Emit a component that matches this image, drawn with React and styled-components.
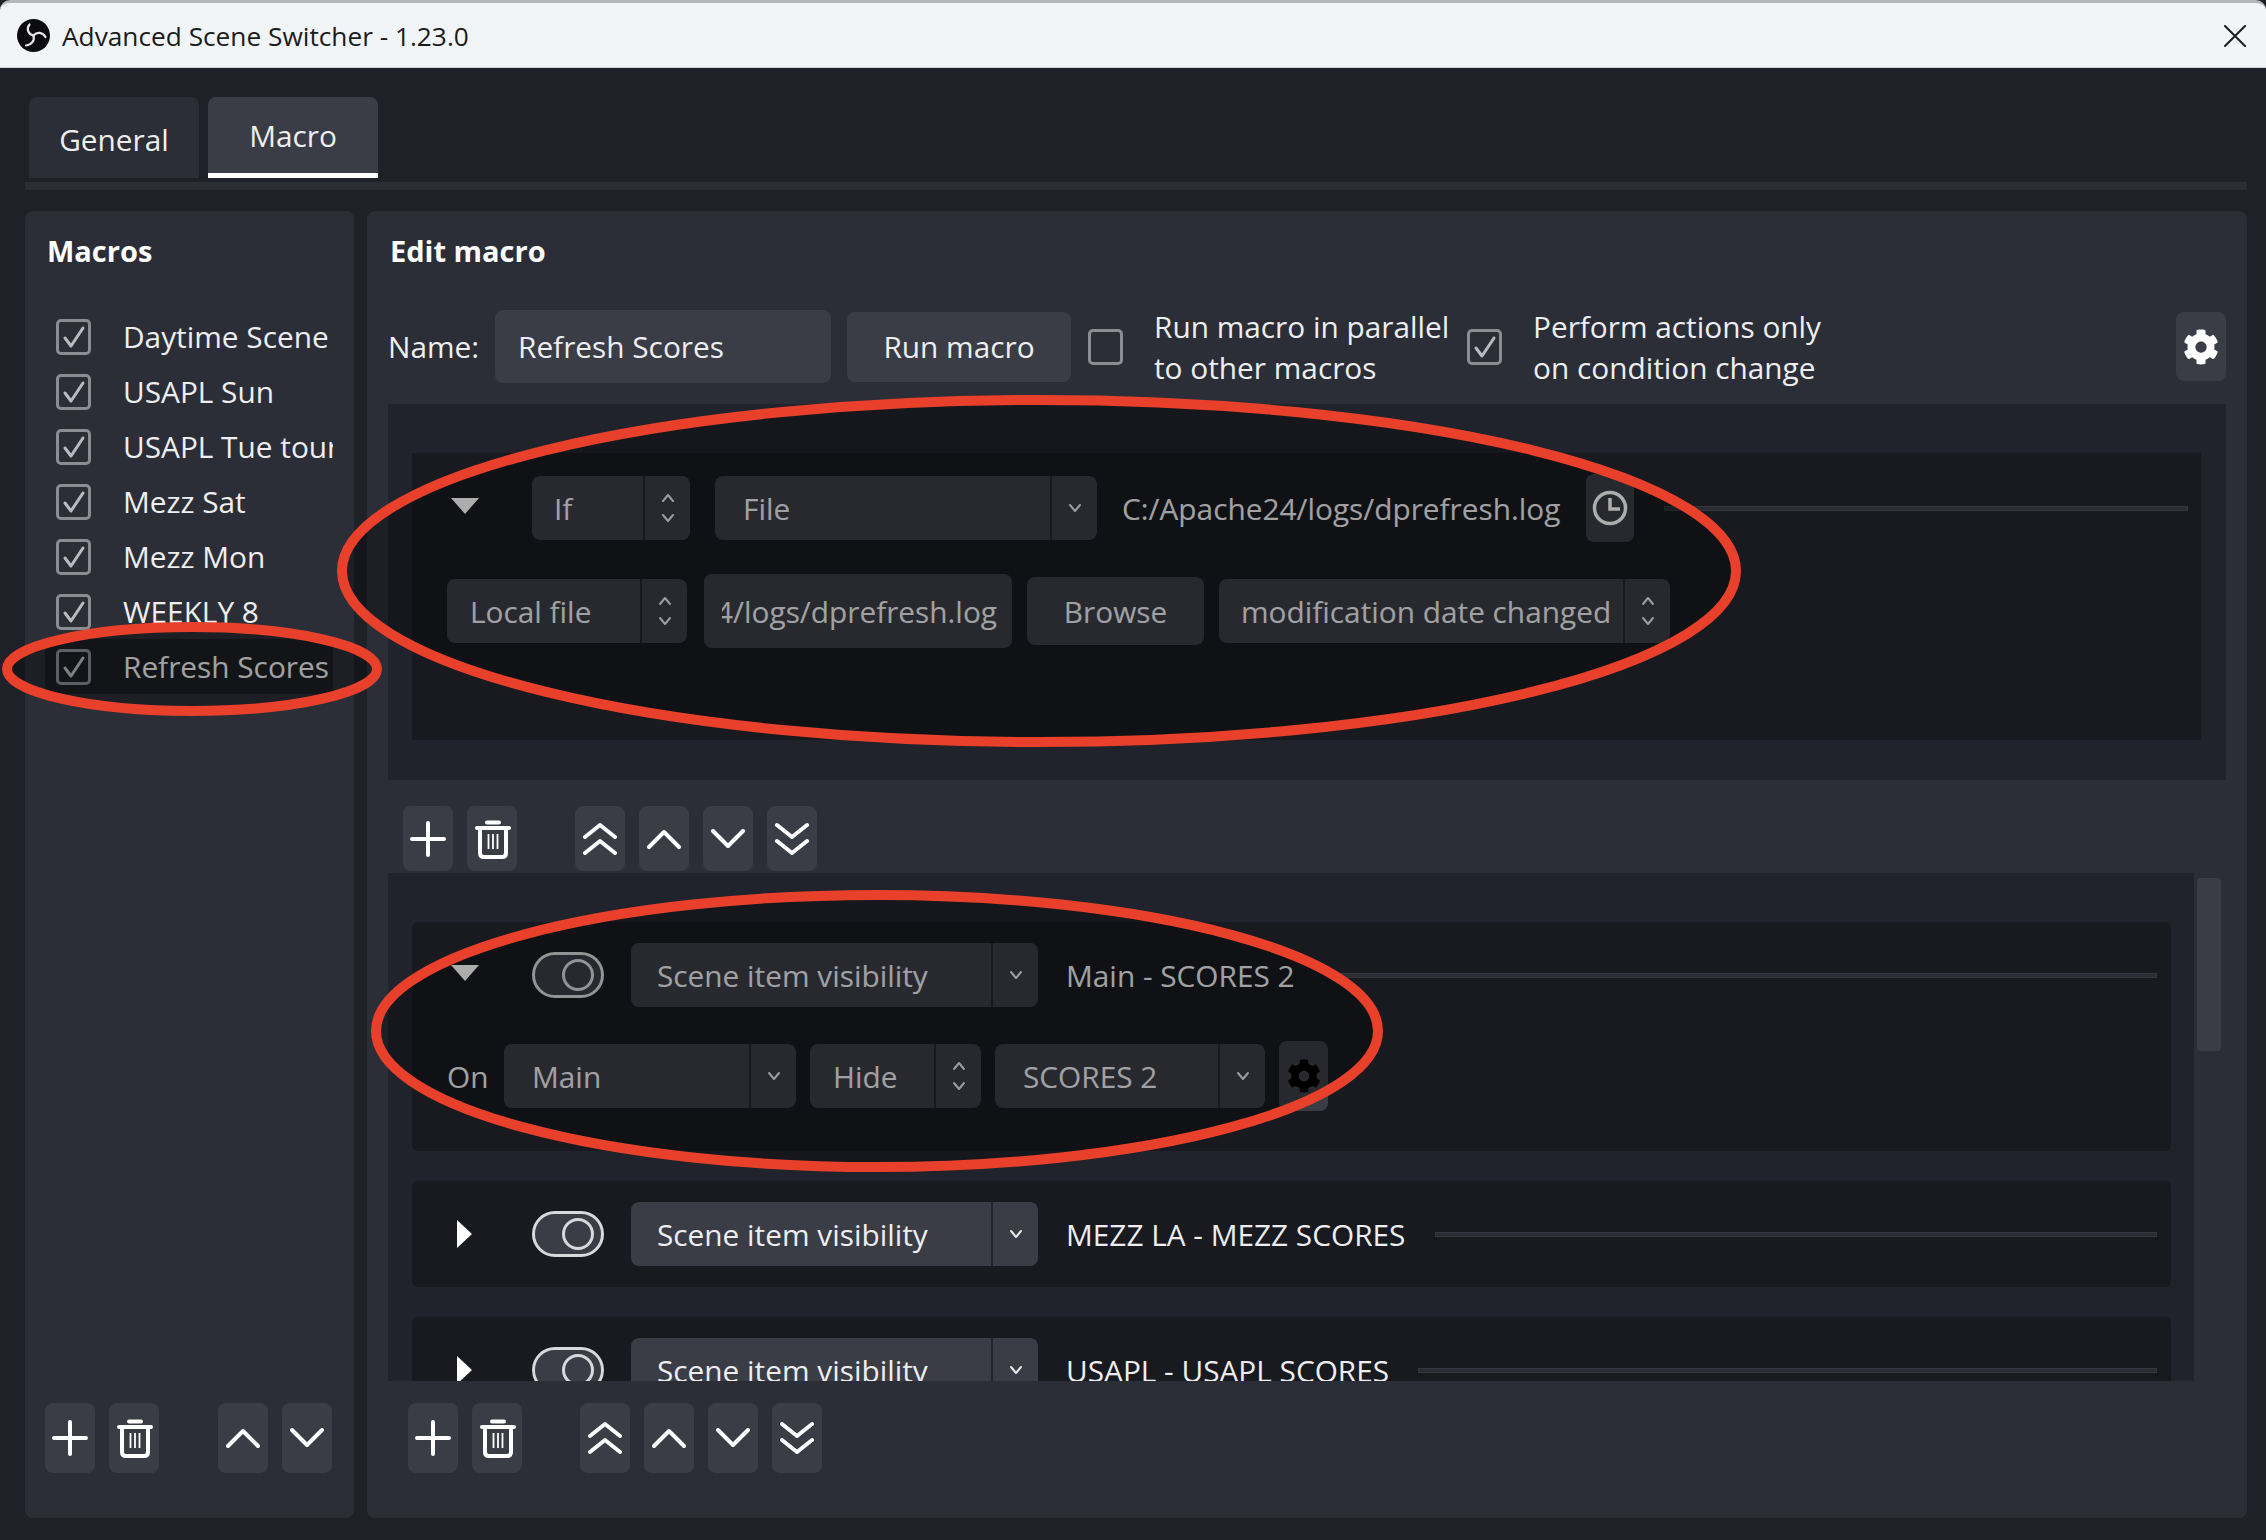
import React from "react";
import styled, { createGlobalStyle } from "styled-components";
import { FaCog } from "react-icons/fa";

const GlobalStyle = createGlobalStyle`
  html, body {
    margin: 0;
    padding: 0;
    background: #1e2128;
  }
  * {
    box-sizing: border-box;
  }
`;

const macroNames = [
  "Daytime Scene",
  "USAPL Sun",
  "USAPL Tue tournament",
  "Mezz Sat",
  "Mezz Mon",
  "WEEKLY 8",
  "Refresh Scores",
];

const Plus = () => (
  <svg width="36" height="36" viewBox="0 0 36 36">
    <path d="M18 2v32M2 18h32" stroke="#fff" strokeWidth="4" strokeLinecap="round" fill="none" />
  </svg>
);

const Trash = () => (
  <TrashWrap width="36" height="40" viewBox="0 0 36 40" fill="none" stroke="#fff">
    <path d="M12 3.500h12" strokeWidth="4" strokeLinecap="round" />
    <path d="M2 9h32" strokeWidth="4" strokeLinecap="round" />
    <path d="M5 9v25c0 2.500 1.500 4 4 4h18c2.500 0 4-1.500 4-4V9" strokeWidth="4" />
    <path d="M13.500 15v15M18 15v15M22.500 15v15" strokeWidth="1.800" />
  </TrashWrap>
);

const Chevron = ({ direction, double }) => {
  const flip = direction === "down" ? "rotate(180 17 17)" : undefined;
  return (
    <svg width="34" height="34" viewBox="0 0 34 34" fill="none" stroke="#fff" strokeWidth="4" strokeLinecap="round" strokeLinejoin="round">
      <g transform={flip}>
        {double ? <path d="M2 15 17 3l15 12M2 31l15-12 15 12" /> : <path d="M2 25 17 10l15 15" />}
      </g>
    </svg>
  );
};

const SmallChevron = () => (
  <svg width="14" height="10" viewBox="0 0 14 10" fill="none" stroke="#e8e8ea" strokeWidth="2" strokeLinecap="round" strokeLinejoin="round">
    <path d="M2 2l5 6 5-6" />
  </svg>
);

const UpDown = () => (
  <svg width="14" height="30" viewBox="0 0 14 30" fill="none" stroke="#e8e8ea" strokeWidth="2" strokeLinecap="round" strokeLinejoin="round">
    <path d="M2 8l5-6 5 6M2 22l5 6 5-6" />
  </svg>
);

const ClockIcon = () => (
  <svg width="36" height="36" viewBox="0 0 36 36" fill="none" stroke="#fff" strokeWidth="3.500">
    <circle cx="18" cy="18" r="15.500" />
    <path d="M18 8v11h10" />
  </svg>
);

const CheckMark = () => (
  <svg width="24" height="26" viewBox="0 0 24 26" fill="none" stroke="#b9bbc0" strokeWidth="3" strokeLinecap="round" strokeLinejoin="round">
    <path d="M3 14l6 8L21 4" />
  </svg>
);

const ObsLogo = () => (
  <svg width="33" height="33" viewBox="0 0 33 33">
    <circle cx="16.500" cy="16.500" r="16.500" fill="#0c0c0e" />
    <g fill="none" stroke="#e6e6e6" strokeWidth="2.200" strokeLinecap="round">
      <path d="M16.500 16.500C11 15 9 10 12.500 5.500" />
      <path d="M16.500 16.500C20 12.500 25.500 13 28.500 18" />
      <path d="M16.500 16.500C18 21.500 14.500 26 9 26.500" />
    </g>
  </svg>
);

const Combo = ({ width, inset, label, arrow = "down" }) => (
  <ComboBox $width={width}>
    <ComboText $inset={inset}>{label}</ComboText>
    <ComboArrow>{arrow === "updown" ? <UpDown /> : <SmallChevron />}</ComboArrow>
  </ComboBox>
);

const ToolButtons = ({ height, full }) => (
  <>
    <ToolGroup>
      <ToolButton $height={height}><Plus /></ToolButton>
      <ToolButton $height={height}><Trash /></ToolButton>
    </ToolGroup>
    <ToolGroup>
      {full && <ToolButton $height={height}><Chevron direction="up" double /></ToolButton>}
      <ToolButton $height={height}><Chevron direction="up" /></ToolButton>
      <ToolButton $height={height}><Chevron direction="down" /></ToolButton>
      {full && <ToolButton $height={height}><Chevron direction="down" double /></ToolButton>}
    </ToolGroup>
  </>
);

const ActionHead = ({ open, label, lineGap }) => (
  <CardRow>
    <Expander>{open ? <TriangleDown /> : <TriangleRight />}</Expander>
    <Toggle />
    <Combo width={407} inset={26} label="Scene item visibility" />
    <RowLabel $left={28}>{label}</RowLabel>
    <Rule $gap={lineGap} $right={14} />
  </CardRow>
);

export default function App() {
  return (
    <Window>
      <GlobalStyle />
      <TitleBar>
        <ObsLogo />
        <TitleText>Advanced Scene Switcher - 1.23.0</TitleText>
        <CloseButton>
          <svg width="22" height="22" viewBox="0 0 22 22" stroke="#1c1c1c" strokeWidth="2" strokeLinecap="round">
            <path d="M1 1l20 20M21 1L1 21" />
          </svg>
        </CloseButton>
      </TitleBar>

      <Body>
        <Tabs>
          <Tab>General</Tab>
          <Tab $active>Macro</Tab>
        </Tabs>
        <TabLine />

        <Columns>
          <MacrosPanel>
            <Heading>Macros</Heading>
            <MacroList>
              {macroNames.map((name) => (
                <MacroRow key={name} $selected={name === "Refresh Scores"}>
                  <CheckBox><CheckMark /></CheckBox>
                  <MacroName>{name}</MacroName>
                </MacroRow>
              ))}
            </MacroList>
            <MacroTools>
              <ToolButtons height={70} />
            </MacroTools>
          </MacrosPanel>

          <EditPanel>
            <Heading>Edit macro</Heading>
            <NameRow>
              <NameLabel>Name:</NameLabel>
              <NameInput>Refresh Scores</NameInput>
              <RunButton>Run macro</RunButton>
              <CheckOption>
                <CheckBox />
                <OptionText $width={294}>Run macro in parallel<br />to other macros</OptionText>
              </CheckOption>
              <CheckOption>
                <CheckBox><CheckMark /></CheckBox>
                <OptionText>Perform actions only<br />on condition change</OptionText>
              </CheckOption>
              <GearButton><FaCog size={36} color="#fff" /></GearButton>
            </NameRow>

            <ConditionsArea>
              <ConditionCard>
                <CardRow>
                  <Expander><TriangleDown /></Expander>
                  <Combo width={158} inset={22} label="If" arrow="updown" />
                  <Combo width={382} inset={28} label="File" />
                  <RowLabel>C:/Apache24/logs/dprefresh.log</RowLabel>
                  <IconButton><ClockIcon /></IconButton>
                  <Rule $gap={30} $right={13} />
                </CardRow>
                <ConditionFields>
                  <Combo width={240} inset={23} label="Local file" arrow="updown" />
                  <PathInput><PathClip>C:/Apache24/logs/dprefresh.log</PathClip></PathInput>
                  <BrowseButton>Browse</BrowseButton>
                  <Combo width={451} inset={22} label="modification date changed" arrow="updown" />
                </ConditionFields>
              </ConditionCard>
            </ConditionsArea>

            <ConditionTools>
              <ToolButtons height={65} full />
            </ConditionTools>

            <ActionsWrap>
              <ActionsList>
                <ActionCard>
                  <ActionHead open label="Main - SCORES 2" lineGap={44} />
                  <ActionFields>
                    <OnLabel>On</OnLabel>
                    <Combo width={292} inset={28} label="Main" />
                    <Combo width={171} inset={23} label="Hide" arrow="updown" />
                    <Combo width={270} inset={28} label="SCORES 2" />
                    <SmallGearButton><FaCog size={34} color="#000" /></SmallGearButton>
                  </ActionFields>
                </ActionCard>
                <ActionCard>
                  <ActionHead label="MEZZ LA - MEZZ SCORES" lineGap={30} />
                </ActionCard>
                <ActionCard>
                  <ActionHead label="USAPL - USAPL SCORES" lineGap={29} />
                </ActionCard>
              </ActionsList>
              <ScrollTrack><ScrollThumb /></ScrollTrack>
            </ActionsWrap>

            <ActionTools>
              <ToolButtons height={70} full />
            </ActionTools>
          </EditPanel>
        </Columns>
      </Body>

      {/* hand drawn highlight rings sitting on top of the window */}
      <Annotations viewBox="0 0 2266 1540">
        <ellipse cx="192" cy="669" rx="185" ry="42" />
        <ellipse cx="1039" cy="571" rx="697" ry="171" />
        <ellipse cx="877" cy="1031" rx="501" ry="136" />
      </Annotations>
    </Window>
  );
}

const Window = styled.div`
  position: relative;
  width: 2266px;
  height: 1540px;
  overflow: hidden;
  background: #1e2128;
  color: #eeeef0;
  font-family: "Open Sans", "Liberation Sans", sans-serif;
  font-size: 29.800px;
`;

const TitleBar = styled.div`
  display: flex;
  align-items: center;
  height: 68px;
  padding: 1px 20px 0 17px;
  background: #f2f5f8;
  border-top: 3px solid #b4b5b6;
  border-bottom: 1px solid #cfd1d3;
  border-radius: 10px 10px 0 0;
`;

const TitleText = styled.div`
  margin-left: 12px;
  font-size: 26.250px;
  color: #1b1b1b;
`;

const CloseButton = styled.div`
  display: flex;
  margin-left: auto;
`;

const Body = styled.div`
  padding: 29px 19px 0 25px;
`;

const Tabs = styled.div`
  display: flex;
  gap: 9px;
  padding-left: 4px;
`;

const Tab = styled.div`
  display: flex;
  align-items: center;
  justify-content: center;
  width: 170px;
  height: 81px;
  padding-top: ${(p) => (p.$active ? 0 : 4)}px;
  background: ${(p) => (p.$active ? "#3a3d46" : "#2b2e36")};
  border-bottom: ${(p) => (p.$active ? "5px solid #fff" : "none")};
  border-radius: 8px 8px 0 0;
`;

const TabLine = styled.div`
  height: 8px;
  margin-top: 4px;
  background: #2b2e36;
`;

const Columns = styled.div`
  display: flex;
  gap: 13px;
  height: 1307px;
  margin-top: 21px;
`;

const Panel = styled.div`
  display: flex;
  flex-direction: column;
  background: #2b2e37;
  border-radius: 8px;
`;

const MacrosPanel = styled(Panel)`
  width: 329px;
  padding: 20px 0 45px 20px;
`;

const EditPanel = styled(Panel)`
  flex: 1;
  padding: 20px 21px 45px 21px;
`;

const Heading = styled.div`
  height: 40px;
  padding-left: 2px;
  font-size: 29px;
  font-weight: 700;
  line-height: 40px;
  color: #fff;
`;

const MacroList = styled.div`
  width: 288px;
  margin-top: 38px;
  overflow: hidden;
`;

const MacroRow = styled.div`
  display: flex;
  align-items: center;
  gap: 32px;
  width: 288px;
  height: 55px;
  padding-left: 11px;
  background: ${(p) => (p.$selected ? "#1c1e24" : "transparent")};
`;

const MacroName = styled.span`
  white-space: nowrap;
`;

const CheckBox = styled.div`
  display: flex;
  flex-shrink: 0;
  align-items: center;
  justify-content: center;
  width: 35px;
  height: 36px;
  border: 3px solid #8b8d94;
  border-radius: 5px;
`;

const MacroTools = styled.div`
  display: flex;
  gap: 59px;
  margin-top: auto;
`;

const ToolGroup = styled.div`
  display: flex;
  gap: 14px;
`;

const ToolButton = styled.div`
  display: flex;
  align-items: center;
  justify-content: center;
  width: 50px;
  height: ${(p) => p.$height}px;
  background: #3a3d46;
  border-radius: 8px;
`;

const TrashWrap = styled.svg`
  margin-left: 2px;
`;

const NameRow = styled.div`
  display: flex;
  align-items: center;
  margin-top: 39px;
  height: 73px;
`;

const NameLabel = styled.div`
  width: 107px;
`;

const NameInput = styled.div`
  display: flex;
  align-items: center;
  width: 336px;
  height: 73px;
  padding-left: 23px;
  background: #3a3d46;
  border-radius: 8px;
`;

const RunButton = styled.div`
  display: flex;
  align-items: center;
  justify-content: center;
  width: 224px;
  height: 70px;
  margin: 0 17px 0 16px;
  background: #3a3d46;
  border-radius: 8px;
`;

const CheckOption = styled.div`
  display: flex;
  align-items: center;
  gap: 31px;
  margin-right: 19px;
`;

const OptionText = styled.div`
  width: ${(p) => (p.$width ? `${p.$width}px` : "auto")};
  line-height: 41px;
  white-space: nowrap;
`;

const GearButton = styled.div`
  display: flex;
  align-items: center;
  justify-content: center;
  width: 50px;
  height: 69px;
  margin-left: auto;
  background: #3a3d46;
  border-radius: 8px;
`;

const ConditionsArea = styled.div`
  height: 377px;
  margin-top: 21px;
  padding: 49px 25px 40px 24px;
  background: #20232b;
`;

const ConditionCard = styled.div`
  height: 100%;
  padding-top: 21px;
  background: #181a20;
`;

const CardRow = styled.div`
  display: flex;
  align-items: center;
`;

const Expander = styled.div`
  display: flex;
  flex-shrink: 0;
  width: 120px;
  padding-left: 39px;
`;

const TriangleDown = styled.div`
  width: 0;
  height: 0;
  margin-top: -5px;
  border-left: 14px solid transparent;
  border-right: 14px solid transparent;
  border-top: 16px solid #fff;
`;

const TriangleRight = styled.div`
  width: 0;
  height: 0;
  margin-left: 6px;
  border-top: 14px solid transparent;
  border-bottom: 14px solid transparent;
  border-left: 15px solid #fff;
`;

const ComboBox = styled.div`
  display: flex;
  flex-shrink: 0;
  align-items: center;
  width: ${(p) => p.$width}px;
  height: 64px;
  margin-right: 25px;
  background: #3a3d46;
  border-radius: 8px;
`;

const ComboText = styled.div`
  flex: 1;
  padding-left: ${(p) => p.$inset}px;
  white-space: nowrap;
`;

const ComboArrow = styled.div`
  display: flex;
  align-items: center;
  justify-content: center;
  width: 47px;
  height: 100%;
  border-left: 2px solid #24262d;
`;

const RowLabel = styled.div`
  margin-left: ${(p) => (p.$left ? p.$left - 25 : 0)}px;
  white-space: nowrap;
`;

const Rule = styled.div`
  flex: 1;
  height: 5px;
  margin-left: ${(p) => p.$gap}px;
  margin-right: ${(p) => p.$right}px;
  background: #2a2d34;
  border: 1px solid #34373f;
`;

const IconButton = styled.div`
  display: flex;
  align-items: center;
  justify-content: center;
  width: 48px;
  height: 68px;
  margin-left: 26px;
  background: #3a3d46;
  border-radius: 8px;
`;

const ConditionFields = styled.div`
  display: flex;
  align-items: center;
  margin-top: 32px;
  padding-left: 35px;

  ${ComboBox} {
    margin-right: 17px;
  }
`;

const PathInput = styled.div`
  display: flex;
  align-items: center;
  width: 308px;
  height: 74px;
  padding: 0 15px 0 18px;
  background: #3a3d46;
  border-radius: 8px;
`;

const PathClip = styled.div`
  display: flex;
  justify-content: flex-end;
  width: 100%;
  overflow: hidden;
  white-space: nowrap;
`;

const BrowseButton = styled.div`
  display: flex;
  align-items: center;
  justify-content: center;
  width: 177px;
  height: 68px;
  margin: 0 15px;
  background: #3a3d46;
  border-radius: 8px;
`;

const ConditionTools = styled.div`
  display: flex;
  gap: 58px;
  margin-top: 26px;
  padding-left: 15px;
`;

const ActionsWrap = styled.div`
  display: flex;
  gap: 3px;
  height: 508px;
  margin-top: 2px;
  margin-right: 5px;
`;

const ActionsList = styled.div`
  flex: 1;
  padding: 49px 23px 0 24px;
  overflow: hidden;
  background: #20232b;
`;

const ActionCard = styled.div`
  margin-bottom: 30px;
  padding: 21px 0;
  background: #181a20;
  border-radius: 6px;
`;

const ActionFields = styled.div`
  display: flex;
  align-items: center;
  margin-top: 34px;
  padding-bottom: 19px;
  padding-left: 35px;

  ${ComboBox} {
    margin-right: 14px;
  }
`;

const OnLabel = styled.div`
  width: 57px;
`;

const SmallGearButton = styled.div`
  display: flex;
  align-items: center;
  justify-content: center;
  width: 49px;
  height: 70px;
  background: #3a3d46;
  border-radius: 8px;
`;

const Toggle = styled.div`
  display: flex;
  flex-shrink: 0;
  align-items: center;
  justify-content: flex-end;
  width: 72px;
  height: 46px;
  margin-right: 27px;
  padding-right: 7px;
  background: #3a3d46;
  border: 3px solid #d8d9db;
  border-radius: 23px;

  &::after {
    content: "";
    width: 26px;
    height: 26px;
    border: 3px solid #d8d9db;
    border-radius: 50%;
  }
`;

const ScrollTrack = styled.div`
  width: 24px;
  padding-top: 5px;
`;

const ScrollThumb = styled.div`
  height: 173px;
  background: #3a3d46;
  border-radius: 4px;
`;

const ActionTools = styled.div`
  display: flex;
  gap: 58px;
  margin-top: 22px;
  padding-left: 20px;
`;

const Annotations = styled.svg`
  position: absolute;
  top: 0;
  left: 0;
  width: 2266px;
  height: 1540px;
  pointer-events: none;

  ellipse {
    fill: rgba(0, 0, 0, 0.32);
    stroke: #e8402a;
    stroke-width: 10;
  }
`;
